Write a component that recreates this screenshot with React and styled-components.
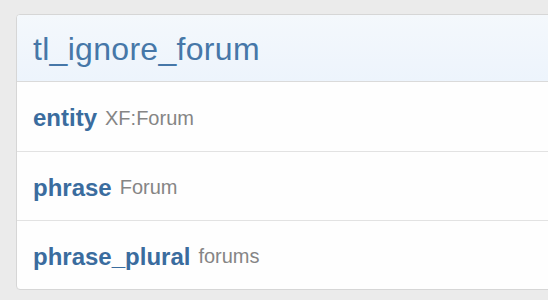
import React from 'react'
import styled, { createGlobalStyle } from 'styled-components'

const GlobalStyle = createGlobalStyle`
  html, body {
    margin: 0;
    padding: 0;
    background: #ebebeb;
    font-family: "Liberation Sans", Arial, sans-serif;
  }
`

const Page = styled.div`
  width: 548px;
  height: 300px;
  overflow: hidden;
  padding: 14px 0 0 16px;
  box-sizing: border-box;
`

const Block = styled.div`
  width: 560px;
  background: #fefefe;
  border: 1px solid #d6d6d6;
  border-radius: 4px;
  overflow: hidden;
`

const Header = styled.h2`
  margin: 0;
  height: 67px;
  display: flex;
  align-items: center;
  padding: 2px 16px 0;
  box-sizing: border-box;
  font-size: 32px;
  letter-spacing: 0.3px;
  font-weight: normal;
  color: #4677a8;
  background: linear-gradient(to bottom, #f4f8fc, #edf4fc);
  border-bottom: 1px solid #dadada;
`

const Row = styled.div`
  height: 69px;
  box-sizing: border-box;
  display: flex;
  align-items: center;
  padding: 3px 16px 0;
  border-top: ${p => (p.first ? 'none' : '1px solid #e2e2e2')};
`

const Label = styled.span`
  font-size: 24px;
  font-weight: bold;
  color: #3a6c9e;
  margin-right: 8px;
`

const Value = styled.span`
  font-size: 20px;
  color: #858585;
`

const rows = [
  { label: 'entity', value: 'XF:Forum' },
  { label: 'phrase', value: 'Forum' },
  { label: 'phrase_plural', value: 'forums' }
]

export default function App() {
  return (
    <Page>
      <GlobalStyle />
      <Block>
        <Header>tl_ignore_forum</Header>
        {rows.map((r, i) => (
          <Row key={r.label} first={i === 0}>
            <Label>{r.label}</Label>
            <Value>{r.value}</Value>
          </Row>
        ))}
      </Block>
    </Page>
  )
}
